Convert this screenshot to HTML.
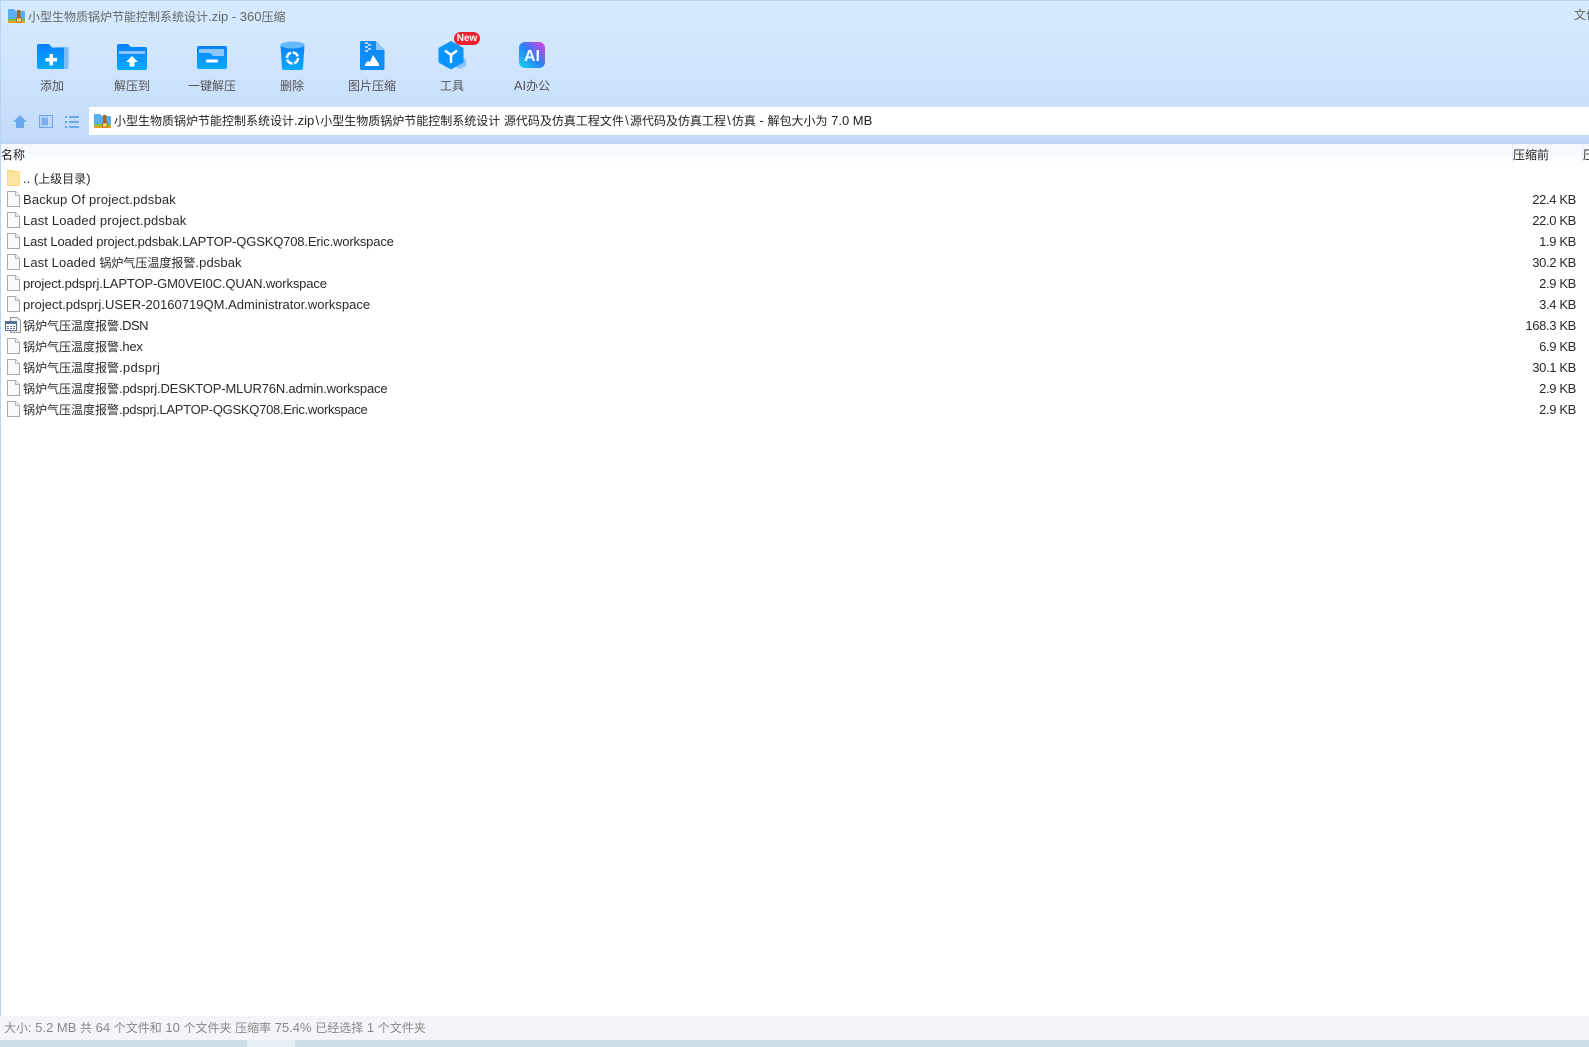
<!DOCTYPE html>
<html lang="zh"><head><meta charset="utf-8"><title>360压缩</title>
<style>
html,body{margin:0;padding:0;width:1589px;height:1047px;overflow:hidden;background:#fff}
body{position:relative;font:13px "Liberation Sans","Noto Sans CJK SC",sans-serif;color:#222}
i{font-style:normal;font-size:12px}
.a{position:absolute;white-space:nowrap}
.top{left:0;top:0;width:1589px;height:144px;background:linear-gradient(180deg,#d6eaff 0,#d0e5fd 60px,#c3dcf8 135px,#bdd8f6 144px);border-top:1px solid #b5d5f5;box-sizing:border-box}
.lbl{top:77px;width:80px;text-align:center;color:#555;font-size:12px;line-height:18px}
.addr{left:89px;top:107px;width:1500px;height:28px;background:#fff}
.addrt{left:114px;top:112px;line-height:18px;color:#222}
.bs{letter-spacing:1.2px;padding-left:1.2px}
.head{left:0;top:144px;width:1589px;height:22px;background:linear-gradient(180deg,#f2f8fe,#fff)}
.h{top:147px;line-height:17px;color:#222;font-size:12px}
.r{left:23px;height:21px;line-height:21px;color:#2a2a2a;font-size:13px}
.s{left:1440px;width:136px;text-align:right;height:21px;line-height:21px;color:#2a2a2a;font-size:13px;letter-spacing:-.35px}
.ic{left:7px;width:13px;height:16px}
</style></head><body>
<div class="a top"></div>
<div class="a" style="left:0;top:0;width:1px;height:1016px;background:#b5d5f5;z-index:3"></div>

<svg class="a" style="left:8px;top:9px" width="17" height="14" viewBox="0 0 17 14"><path d="M1 0h5l2 2h8a1 1 0 0 1 1 1v11H0V1a1 1 0 0 1 1-1z" fill="#58b0f0"/><rect y="10" width="17" height="2" fill="#7cc33f"/><rect y="12" width="17" height="2" fill="#f0a020"/><rect x="9" y="1" width="3.500" height="9" fill="#a8662b"/><rect x="8.500" y="9" width="5" height="4" fill="#f6d26a" stroke="#8a5a20" stroke-width=".7"/></svg>
<div class="a" style="left:28px;top:8px;line-height:18px;color:#666"><i>小型生物质锅炉节能控制系统设计</i>.zip - 360<i>压缩</i></div>
<div class="a" style="left:1574px;top:6px;line-height:18px;color:#666;font-size:12px">文件</div>

<!-- toolbar icons -->
<svg class="a" style="left:37px;top:44px" width="32" height="26" viewBox="0 0 32 26"><defs><linearGradient id="b" x1="0" y1="0" x2="0" y2="1"><stop offset="0" stop-color="#0a80ff"/><stop offset="1" stop-color="#05aaff"/></linearGradient></defs><rect x="22" y="3" width="9.500" height="22" rx="2" fill="#7cbcf8"/><path d="M2 0h10l3 3.500h10a2 2 0 0 1 2 2V25H2a2 2 0 0 1-2-2V2a2 2 0 0 1 2-2z" fill="url(#b)"/><path d="M12.500 10h3.500v4h4v3.500h-4v4h-3.500v-4h-4V14h4z" fill="#fff"/></svg>
<svg class="a" style="left:117px;top:44px" width="30" height="26" viewBox="0 0 30 26"><path d="M2 0h9l3 3h14a2 2 0 0 1 2 2v19a2 2 0 0 1-2 2H2a2 2 0 0 1-2-2V2a2 2 0 0 1 2-2z" fill="url(#b)"/><rect x="2" y="7" width="26" height="3" fill="#86c4fb"/><path d="M15 12l6 6h-3.500v4.500h-5V18H9z" fill="#fff"/></svg>
<svg class="a" style="left:197px;top:46px" width="30" height="24" viewBox="0 0 30 24"><rect width="30" height="23" rx="2" fill="url(#b)"/><path d="M2 3h24a1 1 0 0 1 1 1v6H16l-3-3H2z" fill="#8fc6fb"/><rect x="9" y="13.500" width="12" height="3" rx="1" fill="#fff"/></svg>
<svg class="a" style="left:280px;top:41px" width="25" height="29" viewBox="0 0 25 29"><path d="M.5 4c2 3 22 3 24 0l-1.500 23a2 2 0 0 1-2 2H4a2 2 0 0 1-2-2z" fill="url(#b)"/><ellipse cx="12.500" cy="4" rx="12" ry="3.500" fill="#66b8fb"/><circle cx="12.500" cy="17" r="5.500" fill="none" stroke="#fff" stroke-width="2.600" stroke-dasharray="7 1.600"/></svg>
<svg class="a" style="left:360px;top:41px" width="25" height="29" viewBox="0 0 25 29"><path d="M1.500 0H16l8.500 9v18.500a1.500 1.500 0 0 1-1.500 1.500H1.500A1.500 1.500 0 0 1 0 27.500v-26A1.500 1.500 0 0 1 1.500 0z" fill="#0f8cf5"/><path d="M16 0l8.500 9H16z" fill="#8cc6fa"/><path d="M5 1h3v2H5zM8 3h3v2H8zM5 5h3v2H5zM8 7h3v2H8zM5 9h3v2H5z" fill="#a8d6fc"/><path d="M5 25v-2l3-3 2 1 3-7 6 9v2z" fill="#fff"/></svg>
<svg class="a" style="left:438px;top:41px" width="30" height="30" viewBox="0 0 30 30"><path d="M22 15l6 3v7l-6 3-6-3v-7z" fill="#8ec4fb"/><path d="M13 0l12.500 7v14.500L13 28.500.5 21.500V7z" fill="#0a94ff"/><path d="M13 14L7 9.500M13 14l6-4.500M13 14v8" stroke="#fff" stroke-width="2.500" fill="none"/></svg>
<div class="a" style="left:454px;top:32px;width:26px;height:13px;border-radius:7px;background:#f0202f;color:#fff;font:bold 10px/13px 'Liberation Sans',sans-serif;text-align:center">New</div>
<svg class="a" style="left:519px;top:42px" width="26" height="26" viewBox="0 0 26 26"><defs><linearGradient id="ai" x1="0" y1="1" x2="1" y2="0"><stop offset="0" stop-color="#10d8ec"/><stop offset=".5" stop-color="#2a80f8"/><stop offset="1" stop-color="#e83ce0"/></linearGradient></defs><rect width="26" height="26" rx="6" fill="url(#ai)"/><text x="13" y="19" text-anchor="middle" font-family="Liberation Sans" font-weight="bold" font-size="16" fill="#fff">AI</text></svg>

<div class="a lbl" style="left:12px">添加</div>
<div class="a lbl" style="left:92px">解压到</div>
<div class="a lbl" style="left:172px">一键解压</div>
<div class="a lbl" style="left:252px">删除</div>
<div class="a lbl" style="left:332px">图片压缩</div>
<div class="a lbl" style="left:412px">工具</div>
<div class="a lbl" style="left:492px"><span style="font-size:13px">AI</span>办公</div>

<!-- nav -->
<svg class="a" style="left:13px;top:115px" width="14" height="13" viewBox="0 0 14 13"><path d="M7 0l7 7h-3v6H3V7H0z" fill="#6ca6ec"/></svg>
<svg class="a" style="left:39px;top:115px" width="14" height="13" viewBox="0 0 14 13"><rect x=".6" y=".6" width="12.800" height="11.800" fill="#cfe3fa" stroke="#6ca6ec" stroke-width="1.200"/><rect x="2.500" y="2.500" width="6.500" height="8" fill="#7aaeee"/><rect x="9.500" y="2.500" width="2" height="8" fill="#b8d4f6"/></svg>
<svg class="a" style="left:65px;top:116px" width="14" height="12" viewBox="0 0 14 12"><path d="M0 0h2v2H0zM4 0h10v2H4zM0 5h2v2H0zM4 5h10v2H4zM0 10h2v2H0zM4 10h10v2H4z" fill="#6ca6ec"/></svg>
<div class="a addr"></div>
<svg class="a" style="left:94px;top:114px" width="17" height="14" viewBox="0 0 17 14"><path d="M1 0h5l2 2h8a1 1 0 0 1 1 1v11H0V1a1 1 0 0 1 1-1z" fill="#58b0f0"/><rect y="10" width="17" height="2" fill="#7cc33f"/><rect y="12" width="17" height="2" fill="#f0a020"/><rect x="9" y="1" width="3.500" height="9" fill="#a8662b"/><rect x="8.500" y="9" width="5" height="4" fill="#f6d26a" stroke="#8a5a20" stroke-width=".7"/></svg>
<div class="a addrt"><i>小型生物质锅炉节能控制系统设计</i>.zip<span class="bs">\</span><i>小型生物质锅炉节能控制系统设计</i> <i>源代码及仿真工程文件</i><span class="bs">\</span><i>源代码及仿真工程</i><span class="bs">\</span><i>仿真</i> - <i>解包大小为</i> 7.0 MB</div>

<!-- header -->
<div class="a head"></div>
<div class="a h" style="left:1px">名称</div>
<div class="a h" style="left:1513px">压缩前</div>
<div class="a h" style="left:1583px">压</div>
<div class="a" style="left:1512px;top:144px;width:1px;height:18px;background:#e3eefa"></div>
<div class="a" style="left:1582px;top:144px;width:1px;height:18px;background:#e3eefa"></div>

<!-- rows -->
<svg class="a ic" style="top:170px" width="13" height="16" viewBox="0 0 13 16"><path d="M1 0h5l1 1h5a1 1 0 0 1 1 1v13a1 1 0 0 1-1 1H1a1 1 0 0 1-1-1V1a1 1 0 0 1 1-1z" fill="#fbdc83"/><rect x="1" y="2" width="11" height="13" fill="#fde7a0"/></svg>
<div class="a r" style="top:168px">.. (<i>上级目录</i>)</div>

<svg width="0" height="0" style="position:absolute"><defs><g id="f"><path d="M.5.500h8l4 4v11H.5z" fill="#fafafa" stroke="#a8a8a8"/><path d="M8.500.500v4h4" fill="#f0f0f0" stroke="#b8b8b8"/></g></defs></svg>
<svg class="a ic" style="top:191px" width="13" height="16"><use href="#f"/></svg><div class="a r" style="top:189px;letter-spacing:.17px">Backup Of project.pdsbak</div><div class="a s" style="top:189px">22.4 KB</div>
<svg class="a ic" style="top:212px" width="13" height="16"><use href="#f"/></svg><div class="a r" style="top:210px;letter-spacing:.14px">Last Loaded project.pdsbak</div><div class="a s" style="top:210px">22.0 KB</div>
<svg class="a ic" style="top:233px" width="13" height="16"><use href="#f"/></svg><div class="a r" style="top:231px;letter-spacing:-.16px">Last Loaded project.pdsbak.LAPTOP-QGSKQ708.Eric.workspace</div><div class="a s" style="top:231px">1.9 KB</div>
<svg class="a ic" style="top:254px" width="13" height="16"><use href="#f"/></svg><div class="a r" style="top:252px;letter-spacing:.1px">Last Loaded <i style="letter-spacing:0">锅炉气压温度报警</i>.pdsbak</div><div class="a s" style="top:252px">30.2 KB</div>
<svg class="a ic" style="top:275px" width="13" height="16"><use href="#f"/></svg><div class="a r" style="top:273px;letter-spacing:-.13px">project.pdsprj.LAPTOP-GM0VEI0C.QUAN.workspace</div><div class="a s" style="top:273px">2.9 KB</div>
<svg class="a ic" style="top:296px" width="13" height="16"><use href="#f"/></svg><div class="a r" style="top:294px;letter-spacing:.02px">project.pdsprj.USER-20160719QM.Administrator.workspace</div><div class="a s" style="top:294px">3.4 KB</div>
<svg class="a" style="left:5px;top:317px" width="17" height="16" viewBox="0 0 17 16"><path d="M5.500.500h7l3 3v12h-10z" fill="#f4f4f4" stroke="#999"/><rect x=".5" y="4.500" width="11" height="9" fill="#fff" stroke="#5a6f96"/><rect x="1" y="5" width="10" height="2" fill="#5a6f96"/><path d="M2 9h2v1H2zM5 9h2v1H5zM8 9h2v1H8zM2 11h2v1H2zM5 11h2v1H5zM8 11h2v1H8z" fill="#5a6f96"/></svg><div class="a r" style="top:315px"><i>锅炉气压温度报警</i><span style="letter-spacing:-.5px">.DSN</span></div><div class="a s" style="top:315px">168.3 KB</div>
<svg class="a ic" style="top:338px" width="13" height="16"><use href="#f"/></svg><div class="a r" style="top:336px"><i>锅炉气压温度报警</i><span style="letter-spacing:-.25px">.hex</span></div><div class="a s" style="top:336px">6.9 KB</div>
<svg class="a ic" style="top:359px" width="13" height="16"><use href="#f"/></svg><div class="a r" style="top:357px"><i>锅炉气压温度报警</i><span style="letter-spacing:.3px">.pdsprj</span></div><div class="a s" style="top:357px">30.1 KB</div>
<svg class="a ic" style="top:380px" width="13" height="16"><use href="#f"/></svg><div class="a r" style="top:378px"><i>锅炉气压温度报警</i><span style="letter-spacing:-.15px">.pdsprj.DESKTOP-MLUR76N.admin.workspace</span></div><div class="a s" style="top:378px">2.9 KB</div>
<svg class="a ic" style="top:401px" width="13" height="16"><use href="#f"/></svg><div class="a r" style="top:399px"><i>锅炉气压温度报警</i><span style="letter-spacing:-.28px">.pdsprj.LAPTOP-QGSKQ708.Eric.workspace</span></div><div class="a s" style="top:399px">2.9 KB</div>

<!-- status -->
<div class="a" style="left:0;top:1016px;width:1589px;height:24px;background:#f3f5f9"></div>
<div class="a" style="left:4px;top:1019px;line-height:18px;color:#888"><i>大小</i>: 5.2 MB <i>共</i> 64 <i>个文件和</i> 10 <i>个文件夹</i> <i>压缩率</i> 75.4% <i>已经选择</i> 1 <i>个文件夹</i></div>
<div class="a" style="left:0;top:1040px;width:1589px;height:7px;background:#cddde5"></div>
<div class="a" style="left:247px;top:1040px;width:48px;height:7px;background:#e6eff3"></div>
</body></html>
